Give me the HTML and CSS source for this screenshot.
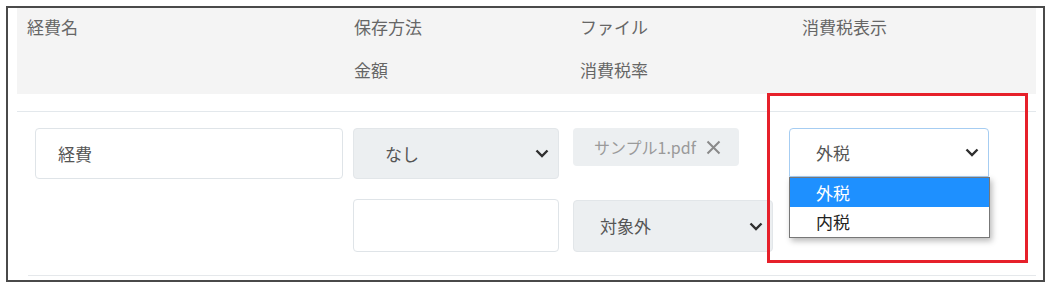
FILE: index.html
```html
<!DOCTYPE html>
<html lang="ja">
<head>
<meta charset="utf-8">
<title>経費</title>
<link rel="stylesheet" href="styles.css">
</head>
<body>
<div class="frame">
  <div class="thead">
    <div class="h">経費名</div>
    <div class="h">保存方法</div>
    <div class="h">ファイル</div>
    <div class="h">消費税表示</div>
    <div></div>
    <div class="h">金額</div>
    <div class="h">消費税率</div>
    <div></div>
  </div>
  <div class="tbody">
    <div class="field input name">経費</div>
    <div class="field select method"><span class="val">なし</span><svg class="chev" width="14" height="9" viewBox="0 0 14 9"><polyline points="1.5,1.5 7,7 12.5,1.5" fill="none" stroke="#2f2f2f" stroke-width="2.4"/></svg></div>
    <div class="chip"><span>サンプル1.pdf</span><svg class="x" width="15" height="15" viewBox="0 0 15 15"><path d="M1.5 1.5 L13.5 13.5 M13.5 1.5 L1.5 13.5" stroke="#8a8a8a" stroke-width="2" fill="none"/></svg></div>
    <div class="taxcell">
      <div class="field select focus"><span class="val">外税</span><svg class="chev" width="14" height="9" viewBox="0 0 14 9"><polyline points="1.5,1.5 7,7 12.5,1.5" fill="none" stroke="#2f2f2f" stroke-width="2.4"/></svg></div>
      <div class="dropdown">
        <div class="opt sel">外税</div>
        <div class="opt">内税</div>
      </div>
    </div>
    <div></div>
    <div class="field input amount"></div>
    <div class="field select rate"><span class="val">対象外</span><svg class="chev" width="14" height="9" viewBox="0 0 14 9"><polyline points="1.5,1.5 7,7 12.5,1.5" fill="none" stroke="#2f2f2f" stroke-width="2.4"/></svg></div>
    <div></div>
  </div>
  <div class="rule"></div>
  <div class="highlight"></div>
</div>
</body>
</html>
```

FILE: styles.css
```css
* { box-sizing: border-box; }
html, body { margin: 0; padding: 0; background: #fff; }
body {
  font-family: "Noto Sans CJK JP", "Noto Sans", "Liberation Sans", sans-serif;
  font-size: 17px;
  color: #555;
}
.frame {
  position: relative;
  margin: 6px 0 0 6px;
  width: 1039px;
  height: 276px;
  border: 2px solid #4a4a4a;
  padding: 0 7px 0 9px;
}
.thead {
  background: #f4f4f4;
  height: 86px;
  padding: 7px 0 12px 10px;
  display: grid;
  grid-template-columns: 327px 226px 222px 1fr;
  grid-auto-rows: 24px;
  row-gap: 19px;
}
.h {
  line-height: 24px;
  color: #666;
  white-space: nowrap;
}
.tbody {
  margin-top: 17px;
  border-top: 1px solid #e3e8ec;
  padding: 16px 0 23px 18px;
  display: grid;
  grid-template-columns: 318px 220px 216px 200px;
  grid-template-rows: 51px 53px;
  row-gap: 20px;
  align-items: start;
}
.field {
  display: flex;
  align-items: center;
  border-radius: 4px;
  line-height: 24px;
  color: #555;
}
.input {
  background: #fff;
  border: 1px solid #dfe4e8;
}
.name { width: 308px; height: 51px; padding-left: 22px; }
.amount { width: 206px; height: 53px; }
.select {
  background: #eceff1;
  border: 1px solid #e2e6e9;
  justify-content: space-between;
  padding-right: 9px;
}
.method { width: 206px; height: 51px; padding-left: 31px; }
.rate { width: 200px; height: 52px; margin-top: 1px; padding-left: 26px; }
.chev { display: block; flex: none; }
.chip {
  width: 166px;
  height: 38px;
  background: #eceff1;
  border-radius: 4px;
  display: flex;
  align-items: center;
  padding-left: 21px;
  font-size: 16px;
  color: #9a9a9a;
  line-height: 22px;
}
.chip .x { margin-left: 10px; display: block; }
.taxcell { position: relative; width: 200px; height: 49px; }
.focus {
  width: 200px;
  height: 49px;
  background: #fff;
  border: 1px solid #a6cdf2;
  border-radius: 4px 4px 0 0;
  padding-left: 26px;
}
.dropdown {
  position: absolute;
  left: 0;
  top: 49px;
  width: 201px;
  height: 61px;
  background: #fff;
  border: 1px solid #777;
  box-shadow: 2px 3px 6px rgba(0, 0, 0, 0.28);
  z-index: 2;
}
.opt {
  height: 29px;
  line-height: 29px;
  padding-left: 26px;
  color: #222;
}
.opt.sel { background: #1e90ff; color: #fff; }
.rule {
  margin-left: 11px;
  height: 1px;
  background: #e5e8eb;
}
.highlight {
  position: absolute;
  left: 759px;
  top: 85px;
  width: 261px;
  height: 170px;
  border: 3px solid #e6202a;
  z-index: 3;
  pointer-events: none;
}
```
